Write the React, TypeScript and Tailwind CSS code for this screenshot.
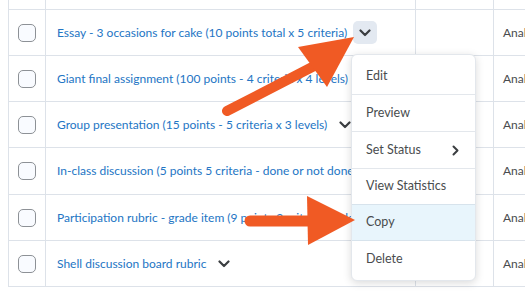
import React from "react";

const rows = [
  { name: "Essay - 3 occasions for cake (10 points total x 5 criteria)", btn: true },
  { name: "Giant final assignment (100 points - 4 criteria x 4 levels)" },
  { name: "Group presentation (15 points - 5 criteria x 3 levels)", chev: true },
  { name: "In-class discussion (5 points 5 criteria - done or not done)" },
  { name: "Participation rubric - grade item (9 points 2 criteria x 3 levels)" },
  { name: "Shell discussion board rubric", chev: true },
];

const Chevron = () => (
  <svg width="12" height="8" viewBox="0 0 12 8" fill="none">
    <path d="M1.5 1.5 L6 6 L10.5 1.5" stroke="#3b3e41" strokeWidth="2.2" strokeLinecap="round" strokeLinejoin="round" />
  </svg>
);

export default function App() {
  return (
    <div
      className="relative w-[525px] h-[298px] overflow-hidden bg-white text-[12px]"
      style={{ fontFamily: "Lato, 'Open Sans', sans-serif" }}
    >
      <div className="ml-[8px] border-l border-[#dde2e9] w-[600px]">
        <div className="flex h-[10px] border-b border-[#dde2e9]">
          <div className="w-[37px] border-r border-[#dde2e9]" />
          <div className="w-[370px] border-r border-[#dde2e9]" />
          <div className="w-[78px] border-r border-[#dde2e9]" />
        </div>
        {rows.map((r, i) => (
          <div key={i} className={`flex ${i === 3 ? "h-[47px]" : "h-[46px]"} border-b border-[#dde2e9]`}>
            <div className="w-[37px] border-r border-[#dde2e9] flex items-center justify-center">
              <div className="w-[18px] h-[18px] rounded-[5px] border border-[#8d9196] bg-[#f9fbff]" />
            </div>
            <div className="w-[370px] border-r border-[#dde2e9] flex items-center pl-[11px] whitespace-nowrap overflow-hidden">
              <span className="text-[#2375c4]">{r.name}</span>
              {r.btn && (
                <span className="ml-[6px] w-[24px] h-[23px] rounded-[5px] bg-[#e3e9f1] flex items-center justify-center shrink-0">
                  <Chevron />
                </span>
              )}
              {r.chev && (
                <span className="ml-[6px] w-[24px] h-[23px] flex items-center justify-center shrink-0">
                  <Chevron />
                </span>
              )}
            </div>
            <div className="w-[78px] border-r border-[#dde2e9]" />
            <div className="flex items-center pl-[9px] text-[#494c4e] text-[12px]">Analytic</div>
          </div>
        ))}
      </div>

      {/* dropdown menu */}
      <div className="absolute left-[351px] top-[54px] w-[125px] bg-white rounded-[6px] border border-[#e3e7ec] shadow-[0_2px_8px_rgba(0,0,0,0.15)] py-[3px] text-[#494c4e] text-[12.5px]">
        <div className="h-[36px] flex items-center pl-[14px]">Edit</div>
        <div className="h-[37px] flex items-center pl-[14px] border-t border-[#e3e7ec]">Preview</div>
        <div className="h-[37px] flex items-center justify-between pl-[14px] pr-[16px] border-t border-[#e3e7ec]">
          <span>Set Status</span>
          <svg width="7" height="11" viewBox="0 0 7 11" fill="none">
            <path d="M1.5 1.5 L5.5 5.5 L1.5 9.5" stroke="#3b3e41" strokeWidth="2" strokeLinecap="round" strokeLinejoin="round" />
          </svg>
        </div>
        <div className="h-[36px] flex items-center pl-[14px] border-t border-[#e3e7ec]">View Statistics</div>
        <div className="h-[37px] flex items-center pl-[14px] border-t border-b border-[#d7e3ec] bg-[#e8f5fc]">Copy</div>
        <div className="h-[36px] flex items-center pl-[14px]">Delete</div>
      </div>

      {/* arrows */}
      <svg className="absolute left-0 top-0 pointer-events-none" width="525" height="298" viewBox="0 0 525 298">
        <line x1="227" y1="111" x2="318" y2="64" stroke="#f05a24" strokeWidth="10" strokeLinecap="round" />
        <polygon points="354,37 298,47 327,87" fill="#f05a24" />
        <line x1="250" y1="221" x2="315" y2="221" stroke="#f05a24" strokeWidth="11" strokeLinecap="round" />
        <polygon points="355,220 307,196 308,245" fill="#f05a24" />
      </svg>
    </div>
  );
}
